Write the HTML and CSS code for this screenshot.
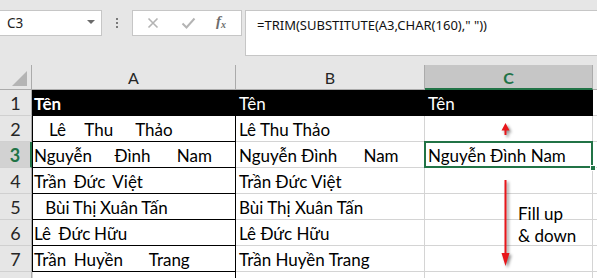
FILE: index.html
```html
<!DOCTYPE html>
<html lang="vi">
<head>
<meta charset="utf-8">
<title>Excel TRIM</title>
<link rel="stylesheet" href="styles.css">
</head>
<body>
<div class="app">
  <div class="topbar">
    <div class="namebox"><span class="ref">C3</span><span class="caret"></span></div>
    <div class="dots"><i></i><i></i><i></i></div>
    <div class="fxbox">
      <svg class="ico" width="12" height="12" viewBox="0 0 12 12"><path d="M1.5 1.5 L10.5 10.5 M10.5 1.5 L1.5 10.5" stroke="#b4b4b4" stroke-width="1.6" fill="none"/></svg>
      <svg class="ico" width="15" height="12" viewBox="0 0 15 12"><path d="M1.5 6.5 L5.5 10.5 L13.5 1.5" stroke="#b4b4b4" stroke-width="2" fill="none"/></svg>
      <span class="fx">f<sub>x</sub></span>
    </div>
    <div class="formula">=TRIM(SUBSTITUTE(A3,CHAR(160),"&nbsp;"))</div>
  </div>

  <div class="sheet">
    <div class="hd corner"><span class="tri"></span></div>
    <div class="hd col">A</div>
    <div class="hd col">B</div>
    <div class="hd col sel">C</div>
    <div class="hd col last"></div>

    <div class="rh">1</div>
    <div class="c a top"><b>Tên</b></div>
    <div class="c top">Tên</div>
    <div class="c top">Tên</div>
    <div class="c d"></div>

    <div class="rh">2</div>
    <div class="c a">    Lê     Thu      Thảo</div>
    <div class="c">Lê Thu Thảo</div>
    <div class="c"></div>
    <div class="c d"></div>

    <div class="rh rsel">3</div>
    <div class="c a">Nguyễn      Đình       Nam</div>
    <div class="c">Nguyễn Đình      Nam</div>
    <div class="c active">Nguyễn Đình Nam<span class="handle"></span></div>
    <div class="c d"></div>

    <div class="rh">4</div>
    <div class="c a">Trần  Đức  Việt</div>
    <div class="c">Trần Đức Việt</div>
    <div class="c"></div>
    <div class="c d"></div>

    <div class="rh">5</div>
    <div class="c a">   Bùi Thị Xuân Tấn</div>
    <div class="c">Bùi Thị Xuân Tấn</div>
    <div class="c"></div>
    <div class="c d"></div>

    <div class="rh">6</div>
    <div class="c a">Lê  Đức Hữu</div>
    <div class="c">Lê Đức Hữu</div>
    <div class="c"></div>
    <div class="c d"></div>

    <div class="rh">7</div>
    <div class="c a">Trần  Huyền       Trang</div>
    <div class="c">Trần Huyền Trang</div>
    <div class="c"></div>
    <div class="c d"></div>

    <div class="rh"></div>
    <div class="c a8"></div>
    <div class="c"></div>
    <div class="c"></div>
    <div class="c d"></div>

    <svg class="arrow up" width="16" height="20" viewBox="0 0 16 20">
      <path d="M7.5 2 L11.5 9.5 L8.5 9.5 L8.5 14 L6.5 14 L6.5 9.5 L3.5 9.5 Z" fill="#e8161b"/>
    </svg>
    <svg class="arrow down" width="18" height="96" viewBox="0 0 18 96">
      <rect x="6.5" y="2" width="2" height="76" fill="#e8161b"/>
      <path d="M3.5 75 L11.5 75 L7.5 88 Z" fill="#e8161b"/>
    </svg>
    <div class="note">Fill up<br>&amp; down</div>
  </div>
</div>
</body>
</html>
```

FILE: styles.css
```css
* { box-sizing: border-box; }
html, body { margin: 0; padding: 0; }
body {
  width: 597px;
  height: 278px;
  overflow: hidden;
  background: #ffffff;
  font-family: Lato, "Liberation Sans", sans-serif;
}
.app { width: 597px; }

/* ---------- formula bar ---------- */
.topbar {
  height: 65px;
  background: #e6e6e6;
  display: flex;
  align-items: flex-start;
  padding-top: 10px;
}
.namebox {
  width: 102px;
  height: 26px;
  background: #fff;
  border: 1px solid #c6c6c6;
  border-left: none;
  display: flex;
  align-items: center;
  justify-content: space-between;
  padding: 0 6px 0 7px;
  font-family: "Noto Sans", "Open Sans", sans-serif;
  font-size: 13.5px;
  color: #222;
}
.caret {
  width: 0; height: 0;
  border-left: 4px solid transparent;
  border-right: 4px solid transparent;
  border-top: 4px solid #6a6a6a;
  margin-top: -3px;
}
.dots {
  width: 30px;
  height: 26px;
  display: flex;
  flex-direction: column;
  align-items: center;
  justify-content: center;
  gap: 2px;
}
.dots i {
  display: block;
  width: 2px; height: 2px;
  background: #7a7a7a;
}
.fxbox {
  width: 110px;
  height: 26px;
  background: #fff;
  border: 1px solid #c6c6c6;
  display: flex;
  align-items: center;
  padding-left: 14px;
  gap: 0;
}
.fxbox .ico:first-child { margin-right: 22px; }
.fxbox .ico:nth-child(2) { margin-right: 20px; }
.fx {
  font-family: "Liberation Serif", "DejaVu Serif", serif;
  font-style: italic;
  font-weight: bold;
  font-size: 15px;
  color: #6d6d6d;
  margin-top: -3px;
}
.fx sub { font-size: 10px; vertical-align: -2px; }
.formula {
  flex: 1;
  margin-left: 3px;
  height: 46px;
  background: #fff;
  border: 1px solid #c6c6c6;
  border-right: none;
  padding: 5px 0 0 11px;
  font-family: "Noto Sans", "Open Sans", sans-serif;
  font-size: 13px;
  color: #111;
  white-space: pre;
}

/* ---------- sheet ---------- */
.sheet {
  position: relative;
  display: grid;
  grid-template-columns: 32px 204px 189px 168px 1fr;
  grid-template-rows: 25px repeat(8, 26px);
  height: 213px;
  overflow: hidden;
  font-size: 17px;
  color: #000;
}
.hd {
  background: #e6e6e6;
  border-right: 1px solid #ababab;
  border-bottom: 1px solid #ababab;
  display: flex;
  align-items: center;
  justify-content: center;
  font-size: 16px;
  color: #262626;
  padding-top: 1px;
}
.hd.last { border-right: none; }
.hd.sel {
  background: #c6c6c6;
  color: #217346;
  font-weight: bold;
  border-bottom: 2px solid #217346;
}
.corner { position: relative; }
.tri {
  position: absolute;
  right: 4px;
  bottom: 3px;
  width: 0; height: 0;
  border-left: 15px solid transparent;
  border-bottom: 15px solid #b4b4b4;
}
.rh {
  background: #e6e6e6;
  border-right: 1px solid #ababab;
  border-bottom: 1px solid #d0d0d0;
  display: flex;
  align-items: center;
  justify-content: center;
  font-size: 18px;
  color: #262626;
  padding-top: 1px;
}
.rh.rsel {
  background: #d2d2d2;
  border-right: 2px solid #217346;
  color: #217346;
  font-weight: bold;
}
.c {
  border-right: 1px solid #d4d4d4;
  border-bottom: 1px solid #d4d4d4;
  padding: 0 0 0 3px;
  line-height: 25px;
  padding-top: 1px;
  white-space: pre;
  overflow: visible;
}
.c.d { border-right: none; }
.c.a {
  border-left: 1px solid #000;
  border-right: 1px solid #000;
  border-bottom: 1px solid #000;
  padding-left: 1px;
  word-spacing: -0.6px;
}
.c.a8 {
  border-left: 1px solid #d4d4d4;
  border-right: 1px solid #000;
}
.c.top {
  background: #000;
  color: #fff;
  border-color: #000;
}
.c.active { position: relative; }
.c.active::after {
  content: "";
  position: absolute;
  top: -1px; left: -1px; right: -1px; bottom: -1px;
  border: 2px solid #217346;
}
.handle {
  position: absolute;
  right: -4px;
  bottom: -4px;
  width: 6px; height: 6px;
  background: #217346;
  border: 1px solid #fff;
  z-index: 2;
}

/* ---------- overlays ---------- */
.arrow {
  position: absolute;
  filter: drop-shadow(2px 2px 1.5px rgba(0, 0, 0, 0.45));
}
.arrow.up { left: 498px; top: 56px; }
.arrow.down { left: 498px; top: 113px; }
.note {
  position: absolute;
  left: 518px;
  top: 138px;
  font-size: 17px;
  line-height: 22px;
  color: #000;
}
```
